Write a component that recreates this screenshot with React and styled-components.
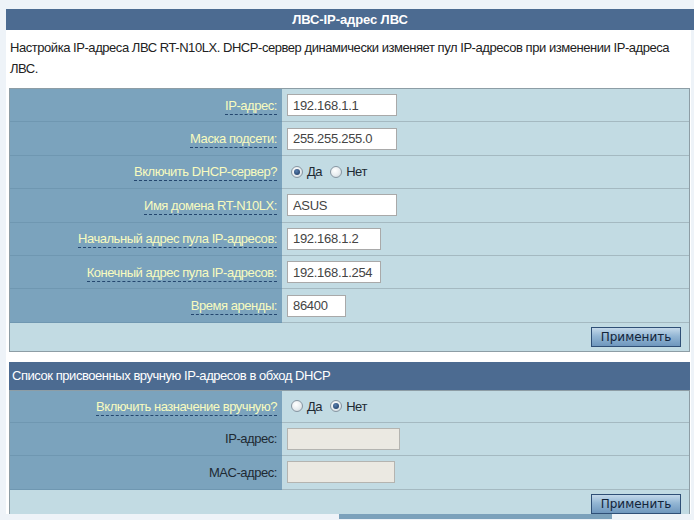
import styled, { createGlobalStyle } from 'styled-components'

const Global = createGlobalStyle`
  html, body {
    margin: 0;
    padding: 0;
    background: #eef3f8;
  }
  body {
    font-family: "Liberation Sans", Arial, sans-serif;
    font-size: 13px;
    letter-spacing: -0.45px;
    color: #222;
  }
`

const Page = styled.div`
  padding-top: 9px;
  padding-left: 6px;
  width: 688px;
`

const TitleBar = styled.div`
  height: 21px;
  line-height: 21px;
  background: #4c6b91;
  color: #fff;
  font-weight: 700;
  font-size: 13px;
  letter-spacing: -0.1px;
  text-align: center;
`

const Content = styled.div`
  background: #fff;
  margin-right: 3px;
  padding: 0 1px 0 3px;
`

const Desc = styled.p`
  margin: 0;
  padding: 7px 0 9px 1px;
  line-height: 21px;
`

const Table = styled.div`
  border: 1px solid #8d9da5;
  border-bottom: ${({ $open }) => $open ? 'none' : '1px solid #8d9da5'};
  background: #c2dbe3;
  margin-bottom: ${({ $gap }) => $gap || 0}px;
`

const Section = styled.div`
  height: 28px;
  line-height: 28px;
  padding-left: 3px;
  background: #4c6b91;
  color: #fff;
  font-size: 13px;
`

const Row = styled.div`
  display: grid;
  grid-template-columns: 272px 1fr;
  height: ${({ $h }) => $h || 33}px;
`

const LabelCell = styled.div`
  background: #7ba3bd;
  border-bottom: 1px solid #6f97b1;
  display: flex;
  align-items: center;
  justify-content: flex-end;
  padding-right: 5px;
`

const Label = styled.span`
  color: ${({ $plain }) => $plain ? '#1e2a33' : '#f8fbbf'};
  border-bottom: ${({ $plain }) => $plain ? 'none' : '1px dashed #24476f'};
  line-height: 15px;
  padding-bottom: ${({ $plain }) => $plain ? 0 : 1}px;
  margin-top: ${({ $plain }) => $plain ? 0 : 2}px;
  white-space: nowrap;
`

const ValueCell = styled.div`
  border-bottom: 1px solid #a4b9c1;
  display: flex;
  align-items: center;
  padding-left: 5px;
  gap: 8px;
`

const Input = styled.input`
  box-sizing: border-box;
  width: ${({ $w }) => $w}px;
  height: 22px;
  border: 1px solid ${({ disabled }) => disabled ? '#b4b4b0' : '#a9a9a9'};
  background: ${({ disabled }) => disabled ? '#ebe9e2' : '#fff'};
  font-family: "Liberation Sans", Arial, sans-serif;
  font-size: 13px;
  letter-spacing: -0.3px;
  color: #444;
  padding: 0 5px;
  outline: none;
`

const Choice = styled.label`
  display: flex;
  align-items: center;
  gap: 4px;
  color: #1e2a33;
  margin-left: ${({ $first }) => $first ? 4 : 0}px;
`

const Dot = styled.span`
  box-sizing: border-box;
  width: 12px;
  height: 12px;
  border-radius: 50%;
  border: 1px solid #8796a2;
  background: radial-gradient(circle at 40% 35%, #ffffff 0%, #e7ecef 55%, #c4cdd3 100%);
  display: flex;
  align-items: center;
  justify-content: center;
  &::after {
    content: '';
    width: 6px;
    height: 6px;
    border-radius: 50%;
    background: ${({ $on }) => $on ? 'radial-gradient(circle at 40% 35%, #5a7fae, #18355c)' : 'transparent'};
  }
`

const ApplyRow = styled.div`
  height: ${({ $h }) => $h}px;
  display: flex;
  align-items: ${({ $top }) => $top ? 'flex-start' : 'center'};
  padding-top: ${({ $top }) => $top ? 4 : 0}px;
  box-sizing: border-box;
  justify-content: flex-end;
  padding-right: 8px;
`

const Button = styled.button`
  width: 90px;
  height: 20px;
  padding: 0;
  border: 1px solid #2f4f76;
  background: linear-gradient(#c4d9ea 0%, #93b6d4 45%, #6f97bd 100%);
  font-family: "DejaVu Sans", Verdana, sans-serif;
  font-size: 12px;
  letter-spacing: 0;
  color: #13243a;
  cursor: pointer;
`

const Tail = styled.div`
  display: flex;
  height: 5px;
  margin-left: -6px;
`

const TailGap = styled.div`
  width: 339px;
  background: #eef3f8;
`

const TailBar = styled.div`
  width: 273px;
  background: #7ba1bb;
`

function Radio({ on, first, children }) {
  return (
    <Choice $first={first}>
      <Dot $on={on} />
      {children}
    </Choice>
  )
}

const lanRows = [
  { label: 'IP-адрес:', value: '192.168.1.1', w: 110 },
  { label: 'Маска подсети:', value: '255.255.255.0', w: 110 },
  { label: 'Включить DHCP-сервер?', radio: true },
  { label: 'Имя домена RT-N10LX:', value: 'ASUS', w: 110 },
  { label: 'Начальный адрес пула IP-адресов:', value: '192.168.1.2', w: 94 },
  { label: 'Конечный адрес пула IP-адресов:', value: '192.168.1.254', w: 94 },
  { label: 'Время аренды:', value: '86400', w: 59 },
]

export default function App() {
  return (
    <>
      <Global />
      <Page>
        <TitleBar>ЛВС-IP-адрес ЛВС</TitleBar>
        <Content>
          <Desc>
            Настройка IP-адреса ЛВС RT-N10LX. DHCP-сервер динамически изменяет пул IP-адресов при изменении IP-адреса ЛВС.
          </Desc>

          <Table $gap={10}>
            {lanRows.map(r => (
              <Row key={r.label} $h={33.4}>
                <LabelCell><Label>{r.label}</Label></LabelCell>
                <ValueCell>
                  {r.radio ? (
                    <>
                      <Radio on first>Да</Radio>
                      <Radio>Нет</Radio>
                    </>
                  ) : (
                    <Input $w={r.w} defaultValue={r.value} />
                  )}
                </ValueCell>
              </Row>
            ))}
            <ApplyRow $h={28}><Button>Применить</Button></ApplyRow>
          </Table>

          <Section>Список присвоенных вручную IP-адресов в обход DHCP</Section>
          <Table $open>
            <Row $h={32}>
              <LabelCell><Label>Включить назначение вручную?</Label></LabelCell>
              <ValueCell>
                <Radio first>Да</Radio>
                <Radio on>Нет</Radio>
              </ValueCell>
            </Row>
            <Row $h={33}>
              <LabelCell><Label $plain>IP-адрес:</Label></LabelCell>
              <ValueCell><Input $w={113} disabled /></ValueCell>
            </Row>
            <Row $h={34}>
              <LabelCell><Label $plain>MAC-адрес:</Label></LabelCell>
              <ValueCell><Input $w={108} disabled /></ValueCell>
            </Row>
            <ApplyRow $h={24} $top><Button>Применить</Button></ApplyRow>
          </Table>
        </Content>
        <Tail>
          <TailGap />
          <TailBar />
        </Tail>
      </Page>
    </>
  )
}
